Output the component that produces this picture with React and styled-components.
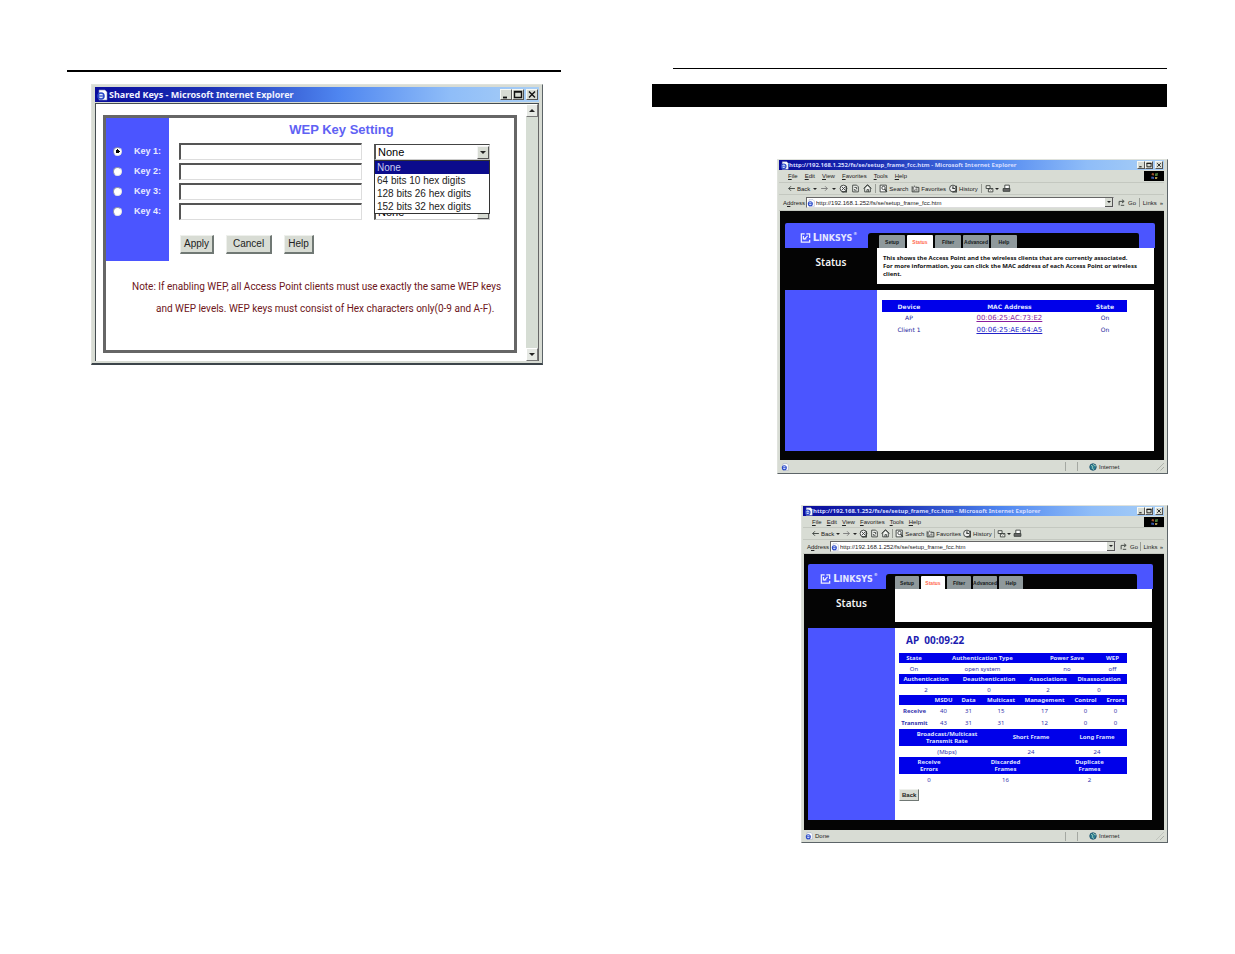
import React from "react";
import styled, { createGlobalStyle, css } from "styled-components";

const sans = `"Liberation Sans", Arial, sans-serif`;
const ui = `"Noto Sans", "Open Sans", sans-serif`;
const wide = `"DejaVu Sans", Verdana, sans-serif`;

const chrome = "#d8dcd4";
const indigo = "#4b55ff";
const royal = "#0000ea";

const GlobalStyle = createGlobalStyle`
  *, *::before, *::after { box-sizing: border-box; }
  body { margin: 0; background: #fff; color: #000; font-family: ${sans}; }
  button, input, select { font: inherit; color: inherit; margin: 0; }
  h1, h2, p, ul, fieldset { margin: 0; padding: 0; border: 0; }
`;

/* ---------- page ---------- */

const Spread = styled.main`
  display: grid;
  grid-template-columns: minmax(0, 494fr) minmax(0, 516fr);
  column-gap: 91px;
  align-items: start;
  padding: 68px 67px 112px;
`;

const Leaf = styled.section`
  display: flex;
  flex-direction: column;
  padding-top: ${(p) => p.$top || 0}px;
`;

const Rule = styled.hr`
  align-self: stretch;
  height: ${(p) => p.$weight}px;
  margin: 0 ${(p) => (p.$inset ? "1px 0 21px" : "0")};
  border: 0;
  background: #000;
`;

const ChapterBar = styled.div`
  height: 23px;
  margin: 15px 1px 0 0;
  background: #000;
`;

/* ---------- window frame ---------- */

const Frame = styled.article`
  display: flex;
  flex-direction: column;
  background: ${chrome};
  border: 1px solid #dfe2dc;
  border-right-color: #5c6468;
  border-bottom-color: #5c6468;
`;

const TitleBar = styled.header`
  display: flex;
  align-items: center;
  gap: ${(p) => (p.$large ? 1 : 0)}px;
  height: ${(p) => (p.$large ? 15 : 10)}px;
  padding-left: 1px;
  background: linear-gradient(90deg, #0a0c9c 0%, #1b2fb4 25%, #4f86f0 55%, #8fbdf8 80%, #a9cff6 100%);
  color: #fff;
  font: bold ${(p) => (p.$large ? 9 : 6)}px / 10px ${ui};
  white-space: nowrap;
  h2 { flex: 1; min-width: 0; overflow: hidden; font: inherit; line-height: 12px; color: ${(p) => (p.$large ? "#f0f2ff" : "#d5dcff")}; }
`;

const Controls = styled.div`
  display: flex;
  padding-right: 1px;
`;

const ControlButton = styled.button`
  display: grid;
  place-items: center;
  width: ${(p) => (p.$large ? 12 : 8)}px;
  height: ${(p) => (p.$large ? 11 : 8)}px;
  margin-left: ${(p) => (p.$apart ? 2 : 0)}px;
  padding: 0;
  background: ${chrome};
  border: 1px solid #f6f8f4;
  border-right-color: #555;
  border-bottom-color: #555;
  svg { width: 100%; height: 100%; }
`;

const Glyph = ({ kind }) => (
  <svg viewBox="0 0 10 9" fill="none" stroke="#111" strokeWidth="1.4" aria-hidden="true">
    {kind === "min" && <path d="M2 7.5h4" strokeWidth="1.8" />}
    {kind === "max" && <path d="M1.5 1.5h7v6h-7zM1 2h8" />}
    {kind === "close" && <path d="M2 1.5l6 6M8 1.5l-6 6" />}
  </svg>
);

const WindowControls = ({ large }) => (
  <Controls>
    <ControlButton $large={large} aria-label="Minimize"><Glyph kind="min" /></ControlButton>
    <ControlButton $large={large} aria-label="Maximize"><Glyph kind="max" /></ControlButton>
    <ControlButton $large={large} $apart aria-label="Close"><Glyph kind="close" /></ControlButton>
  </Controls>
);

const PageIconSvg = styled.svg`
  flex: none;
  width: ${(p) => p.$size}px;
  height: ${(p) => p.$size}px;
`;

const PageIcon = ({ size = 9 }) => (
  <PageIconSvg $size={size} viewBox="0 0 12 12" aria-hidden="true">
    <path d="M3 1h6l2 2v8H3z" fill="#fff" stroke="#8490b8" strokeWidth=".6" />
    <circle cx="5" cy="7" r="3" fill="#dfeaff" stroke="#2a49c8" strokeWidth="1.6" />
    <path d="M2.5 7h5" stroke="#2a49c8" strokeWidth="1.2" />
  </PageIconSvg>
);

/* ---------- shared keys window ---------- */

const KeysFrame = styled(Frame)`
  margin: 12px 18px 0 24px;
  padding: 2px 3px 2px 3px;
  border-bottom: 2px solid #3c444a;
`;

const KeysBody = styled.div`
  display: flex;
  margin-top: 1px;
  border-top: 1px solid #444c50;
  border-left: 1px solid #444c50;
  background: #fff;
`;

const KeysPanel = styled.form`
  flex: 1;
  min-width: 0;
  margin: 11px 9px 8px 7px;
  padding-bottom: 30px;
  border: 3px solid #666;
`;

const KeysGrid = styled.div`
  display: grid;
  grid-template-columns: 63px minmax(0, 1fr);
`;

const KeyList = styled.fieldset`
  min-width: 0;
  padding: 23px 0 40px;
  background: ${indigo};
`;

const KeyChoice = styled.label`
  display: flex;
  align-items: center;
  gap: 12px;
  height: 20px;
  padding-left: 7px;
  color: #e8eaff;
  font: bold 9px / 12px ${sans};
  white-space: nowrap;
`;

const Radio = styled.input`
  appearance: none;
  width: 9px;
  height: 9px;
  border: 1px solid #8a8fb0;
  border-right-color: #e6e6e6;
  border-bottom-color: #e6e6e6;
  border-radius: 50%;
  background: #fff;
  &:checked { background: radial-gradient(circle, #000 0 2px, #fff 2px); }
`;

const KeyFields = styled.div`
  padding: 0 24px 0 10px;
`;

const KeysHeading = styled.h1`
  height: 23px;
  padding-left: 14px;
  color: #5f62f4;
  font: bold 13px / 23px ${sans};
  text-align: center;
`;

const FieldRow = styled.div`
  display: grid;
  grid-template-columns: minmax(0, 183fr) minmax(0, 116fr);
  column-gap: 12px;
  align-items: center;
  height: 20px;
`;

const KeyInput = styled.input.attrs({ type: "text" })`
  width: 100%;
  height: 17px;
  border: 1px solid #ddd;
  border-top: 2px solid #555;
  border-left: 2px solid #555;
  background: #fff;
  font-size: 10px;
`;

const SelectWrap = styled.div`
  position: relative;
  padding-top: 2px;
`;

const LevelSelect = styled.select`
  appearance: none;
  display: block;
  width: 100%;
  height: 16px;
  padding: 0 14px 0 2px;
  border: 1px solid #ccc;
  border-top: 1px solid #444;
  border-left: 2px solid #555;
  border-radius: 0;
  background: #fff;
  font: 11px / 14px ${sans};
`;

const Arrow = styled.span`
  position: absolute;
  top: 4px;
  right: 1px;
  display: grid;
  place-items: center;
  width: 12px;
  height: 13px;
  background: ${chrome};
  border: 1px solid #f4f4f4;
  border-right-color: #555;
  border-bottom-color: #555;
  pointer-events: none;
`;

const Triangle = styled.span`
  border: ${(p) => p.$size || 3}px solid transparent;
  ${(p) => p.$up
    ? css`border-top: 0; border-bottom-color: #222;`
    : css`border-bottom: 0; border-top-color: #222;`}
`;

const Options = styled.ul`
  position: absolute;
  z-index: 2;
  top: 18px;
  left: 0;
  right: 0;
  border: 1px solid #333;
  background: #fff;
  list-style: none;
  font: 10px / 13px ${sans};
  white-space: nowrap;
`;

const Option = styled.li`
  height: 13px;
  padding-left: 2px;
  background: ${(p) => (p.$active ? "#0b0b8c" : "#fff")};
  color: ${(p) => (p.$active ? "#c9cbf0" : "#222")};
`;

const Actions = styled.div`
  display: flex;
  gap: 12px;
  padding: 14px 1px 0;
`;

const PushButton = styled.button`
  height: ${(p) => (p.$small ? 12 : 19)}px;
  padding: 0 ${(p) => (p.$small ? 2 : p.$roomy ? 6 : 3)}px;
  background: ${chrome};
  border: 1px solid #eef0ec;
  border-right: ${(p) => (p.$small ? 1 : 2)}px solid #707874;
  border-bottom: ${(p) => (p.$small ? 1 : 2)}px solid #707874;
  color: #222;
  font: ${(p) => (p.$small ? "bold 6px / 8px" : "10px / 14px")} ${sans};
`;

const Note = styled.p`
  padding: 15px 4px 0 50px;
  color: #6e1620;
  font: 10px / 22px Roboto, ${sans};
  text-indent: -24px;
  white-space: nowrap;
  span { display: block; }
  span + span { text-indent: 0; }
`;

const ScrollBar = styled.div`
  display: flex;
  flex-direction: column;
  justify-content: space-between;
  width: 13px;
  background: #d6ddd4;
  border-right: 1px solid #666;
`;

const ScrollButton = styled.button`
  display: grid;
  place-items: center;
  width: 12px;
  height: 13px;
  padding: 0;
  background: #e6e9e4;
  border: 1px solid #fff;
  border-right-color: #777;
  border-bottom-color: #777;
`;

const LEVELS = ["None", "64 bits 10 hex digits", "128 bits 26 hex digits", "152 bits 32 hex digits"];

function SharedKeysWindow() {
  return (
    <KeysFrame>
      <TitleBar $large>
        <PageIcon size={12} />
        <h2>Shared Keys - Microsoft Internet Explorer</h2>
        <WindowControls large />
      </TitleBar>
      <KeysBody>
        <KeysPanel onSubmit={(e) => e.preventDefault()}>
          <KeysGrid>
            <KeyList aria-label="Active key">
              {[1, 2, 3, 4].map((n) => (
                <KeyChoice key={n}>
                  <Radio type="radio" name="key" defaultChecked={n === 1} />
                  Key {n}:
                </KeyChoice>
              ))}
            </KeyList>
            <KeyFields>
              <KeysHeading>WEP Key Setting</KeysHeading>
              {[1, 2, 3, 4].map((n) => (
                <FieldRow key={n}>
                  <KeyInput aria-label={`Key ${n}`} />
                  <SelectWrap>
                    <LevelSelect aria-label={`Key ${n} level`}>
                      {LEVELS.map((l) => <option key={l}>{l}</option>)}
                    </LevelSelect>
                    <Arrow><Triangle /></Arrow>
                    {n === 1 && (
                      <Options role="listbox">
                        {LEVELS.map((l, i) => (
                          <Option key={l} role="option" aria-selected={i === 0} $active={i === 0}>{l}</Option>
                        ))}
                      </Options>
                    )}
                  </SelectWrap>
                </FieldRow>
              ))}
              <Actions>
                <PushButton type="button">Apply</PushButton>
                <PushButton type="button" $roomy>Cancel</PushButton>
                <PushButton type="button">Help</PushButton>
              </Actions>
            </KeyFields>
          </KeysGrid>
          <Note>
            <span>Note: If enabling WEP, all Access Point clients must use exactly the same WEP keys</span>
            <span>and WEP levels. WEP keys must consist of Hex characters only(0-9 and A-F).</span>
          </Note>
        </KeysPanel>
        <ScrollBar>
          <ScrollButton aria-label="Scroll up"><Triangle $up /></ScrollButton>
          <ScrollButton aria-label="Scroll down"><Triangle /></ScrollButton>
        </ScrollBar>
      </KeysBody>
    </KeysFrame>
  );
}

/* ---------- browser windows ---------- */

const BrowserFrame = styled(Frame)`
  margin: ${(p) => p.$top}px 0 0 ${(p) => p.$indent}px;
  padding: 0 3px 0 1px;
  color: #222;
  font: 6px / 8px ${sans};
`;

const Bar = styled.div`
  display: flex;
  align-items: center;
  height: ${(p) => p.$height}px;
  padding-left: ${(p) => p.$inset || 0}px;
  gap: ${(p) => p.$gap || 0}px;
  border-bottom: 1px solid #c4c8c0;
  white-space: nowrap;
`;

const MenuItem = styled.a`
  color: inherit;
  text-decoration: none;
`;

const Throbber = styled.div`
  display: grid;
  place-items: center;
  width: 20px;
  height: 10px;
  margin-left: auto;
  background: #000;
  svg { width: 9px; height: 8px; }
`;

const ToolButton = styled.button`
  display: flex;
  align-items: center;
  gap: 1px;
  padding: 0;
  border: 0;
  background: none;
  svg { width: 9px; height: 9px; }
`;

const Divider = styled.span`
  width: 1px;
  height: 9px;
  background: #999d96;
`;

const AddressField = styled.label`
  display: flex;
  flex: 1;
  align-items: center;
  min-width: 0;
  gap: 1px;
`;

const AddressBox = styled.span`
  display: flex;
  flex: 1;
  align-items: center;
  min-width: 0;
  height: 11px;
  background: #fff;
  border: 1px solid #666;
  border-right-color: #ddd;
  border-bottom-color: #ddd;
  input { flex: 1; min-width: 0; height: 9px; padding: 0 1px; border: 0; background: none; outline: 0; }
`;

const AddressArrow = styled.span`
  display: grid;
  place-items: center;
  width: 8px;
  height: 9px;
  background: ${chrome};
  border-right: 1px solid #555;
  border-bottom: 1px solid #555;
`;

const AddressTail = styled.div`
  display: flex;
  align-items: center;
  justify-content: space-between;
  width: ${(p) => p.$width}px;
  padding: 0 1px 0 4px;
`;

const Icon = ({ kind }) => (
  <svg viewBox="0 0 16 16" fill="none" stroke="#3a3f3c" strokeWidth="1.6" aria-hidden="true">
    {kind === "back" && <path d="M14 8H3M7 4L3 8l4 4" />}
    {kind === "forward" && <path d="M2 8h11M9 4l4 4-4 4" stroke="#777" />}
    {kind === "stop" && <><circle cx="8" cy="8" r="6" fill="#eee" /><path d="M5 5l6 6M11 5l-6 6" /><path d="M13 4v10H5" strokeWidth="2.4" /></>}
    {kind === "refresh" && <><path d="M3 2h7l3 3v9H3z" fill="#f2f4f0" /><path d="M6 6h4v3M10 11H6V9" /></>}
    {kind === "home" && <><path d="M3 7l5-5 5 5v7H3z" fill="#f2f4f0" /><path d="M7 14v-4h3v4M1 8l7-7 7 7" /></>}
    {kind === "search" && <><path d="M2 2h11v12H2z" fill="#fff" /><circle cx="8" cy="7" r="3" /><path d="M10 9l4 5" strokeWidth="2.4" /></>}
    {kind === "favorites" && <><path d="M2 4v10h12V6H9" fill="#d0d2cc" /><path d="M6 3l1 3 3-1-1 3 2 3-4-1-2 3V8L2 7l3-1z" fill="#fff" strokeWidth="1" /></>}
    {kind === "history" && <><circle cx="7" cy="8" r="6" fill="#eee" /><path d="M7 4v4h4M13 3v11H6" strokeWidth="2.2" /></>}
    {kind === "mail" && <><path d="M2 3h7v5H2zM6 8h8v6H6z" fill="#f4f4ee" /><path d="M6 8l4 3 4-3" strokeWidth="1" /></>}
    {kind === "print" && <><path d="M5 8V2h8v6" fill="#fff" /><path d="M2 8h12v5H2z" fill="#666" /></>}
    {kind === "go" && <path d="M2 13V6h8M7 3l4 3-4 3M5 13h6" />}
    {kind === "globe" && <><circle cx="8" cy="8" r="6.5" fill="#2c7f92" stroke="#184a66" /><path d="M4 5c3 0 4 2 3 4s1 3 3 4M9 2c0 3 3 3 5 4" stroke="#bfe0c8" /></>}
  </svg>
);

const Site = styled.div`
  display: flex;
  flex-direction: column;
  margin-left: 1px;
  padding: ${(p) => p.$pad};
  background: #040404;
`;

const SiteHeader = styled.div`
  display: flex;
  height: 25px;
  padding-right: 16px;
  background: ${indigo};
  border-radius: 2px 2px 0 0;
`;

const Brand = styled.div`
  display: flex;
  align-items: center;
  justify-content: center;
  gap: 2px;
  width: ${(p) => p.$width}px;
  padding: 5px 0 0 4px;
  color: #e4e6ff;
  font: bold 10px / 12px ${wide};
  small { font-size: 8px; }
  sup { align-self: flex-start; margin-left: -1px; font-size: 4px; line-height: 12px; }
  svg { flex: none; width: 11px; height: 10px; }
`;

const TabStrip = styled.nav`
  display: flex;
  flex: 1;
  align-items: flex-end;
  min-width: 0;
  gap: 2px;
  margin-top: 10px;
  padding-left: ${(p) => p.$inset}px;
  background: #040404;
  border-radius: 3px 2px 0 0;
`;

const Tab = styled.button`
  width: ${(p) => p.$width}px;
  height: 13px;
  padding: 0;
  overflow: hidden;
  border: 0;
  border-radius: 1px 1px 0 0;
  background: ${(p) => (p.$active ? "#fff" : "#8f999c")};
  color: ${(p) => (p.$active ? "#ff6a50" : "#15191b")};
  font: bold 5px / 12px ${sans};
`;

const Split = styled.div`
  display: grid;
  grid-template-columns: ${(p) => p.$side}px minmax(0, 1fr);
  min-height: ${(p) => p.$min}px;
  margin: ${(p) => p.$gap || 0}px 1px 0 0;
`;

const PageName = styled.h1`
  padding-top: 7px;
  color: #f4f4f4;
  font: 600 10px / 14px ${ui};
  text-align: center;
`;

const Intro = styled.p`
  padding: 6px 14px 0 6px;
  background: #fff;
  color: #111;
  font: bold 6px / 8px ${ui};
`;

const SidePanel = styled.aside`
  background: ${indigo};
`;

const Sheet = styled.section`
  padding: ${(p) => p.$pad};
  background: #fff;
`;

const StatusBar = styled.footer`
  display: flex;
  align-items: center;
  gap: 2px;
  height: ${(p) => p.$height}px;
  padding-left: 2px;
  svg { width: 8px; height: 8px; }
`;

const Zone = styled.span`
  display: flex;
  align-items: center;
  gap: 2px;
  width: ${(p) => p.$width}px;
  height: 9px;
  margin-left: ${(p) => (p.$first ? "auto" : 0)};
  border-left: 1px solid ${(p) => (p.$plain ? "transparent" : "#a4a8a2")};
`;

const Grip = styled.span`
  width: 8px;
  height: 8px;
  background: repeating-linear-gradient(135deg, #d8dcd4 0 2px, #a9ada6 2px 3px);
  clip-path: polygon(100% 0, 100% 100%, 0 100%);
`;

const MENUS = ["File", "Edit", "View", "Favorites", "Tools", "Help"];
const TABS = ["Setup", "Status", "Filter", "Advanced", "Help"];
const URL = "http://192.168.1.252/fs/se/setup_frame_fcc.htm";

function BrowserWindow({ geo, intro, status, children }) {
  return (
    <BrowserFrame $top={geo.top} $indent={geo.indent}>
      <TitleBar>
        <PageIcon size={9} />
        <h2>{URL} - Microsoft Internet Explorer</h2>
        <WindowControls />
      </TitleBar>
      <Bar $height={geo.bars[0]} $inset={9} $gap={geo.menuGap}>
        {MENUS.map((m) => <MenuItem key={m} href="#"><u>{m[0]}</u>{m.slice(1)}</MenuItem>)}
        <Throbber>
          <svg viewBox="0 0 9 8" aria-hidden="true">
            <path d="M2 1l2 .5v2L1.5 3z" fill="#a0502c" /><path d="M5 1.5L8 1 7.5 4H5z" fill="#4c7a3c" />
            <path d="M1.5 4.5L4 5v2L1 6.5z" fill="#3a58a8" /><path d="M5 5h2.5L7 7H5z" fill="#a8904a" />
          </svg>
        </Throbber>
      </Bar>
      <Bar $height={12} $inset={8} $gap={geo.toolGap}>
        <ToolButton><Icon kind="back" />Back</ToolButton>
        <Triangle $size={2} />
        <ToolButton aria-label="Forward"><Icon kind="forward" /></ToolButton>
        <Triangle $size={2} />
        <ToolButton aria-label="Stop"><Icon kind="stop" /></ToolButton>
        <ToolButton aria-label="Refresh"><Icon kind="refresh" /></ToolButton>
        <ToolButton aria-label="Home"><Icon kind="home" /></ToolButton>
        <Divider />
        <ToolButton><Icon kind="search" />Search</ToolButton>
        <ToolButton><Icon kind="favorites" />Favorites</ToolButton>
        <ToolButton><Icon kind="history" />History</ToolButton>
        <Divider />
        <ToolButton aria-label="Mail"><Icon kind="mail" /><Triangle $size={2} /></ToolButton>
        <ToolButton aria-label="Print"><Icon kind="print" /></ToolButton>
      </Bar>
      <Bar $height={geo.bars[1]} $inset={4}>
        <AddressField>
          <span>A<u>d</u>dress</span>
          <AddressBox>
            <PageIcon size={8} />
            <input type="text" defaultValue={URL} />
            <AddressArrow><Triangle $size={2} /></AddressArrow>
          </AddressBox>
        </AddressField>
        <AddressTail $width={geo.tail}>
          <ToolButton><Icon kind="go" />Go</ToolButton>
          <Divider />
          <span>Links</span>
          <span>»</span>
        </AddressTail>
      </Bar>
      <Site $pad={geo.sitePad}>
        <SiteHeader>
          <Brand $width={geo.brand}>
            <svg viewBox="0 0 12 12" fill="none" stroke="#eef" strokeWidth="1.5" aria-hidden="true">
              <path d="M5 1H1v10h10V8" /><path d="M7 1h4v5" /><path d="M3.5 3.5v3.5H7M8.5 3.5L4 8" />
            </svg>
            <span>L<small>INKSYS</small></span>
            <sup>®</sup>
          </Brand>
          <TabStrip $inset={geo.tabInset}>
            {TABS.map((t) => <Tab key={t} $width={geo.tab} $active={t === "Status"}>{t}</Tab>)}
          </TabStrip>
        </SiteHeader>
        <Split $side={geo.side} $min={geo.introHeight}>
          <PageName>Status</PageName>
          <Intro>{intro}</Intro>
        </Split>
        <Split $side={geo.side} $min={geo.sheetHeight} $gap={6}>
          <SidePanel />
          <Sheet $pad={geo.sheetPad}>{children}</Sheet>
        </Split>
      </Site>
      <StatusBar $height={geo.statusHeight}>
        <PageIcon size={8} />
        <span>{status}</span>
        <Zone $first $width={10} />
        <Zone $width={9} />
        <Zone $plain $width={66}><Icon kind="globe" />Internet</Zone>
        <Grip />
      </StatusBar>
    </BrowserFrame>
  );
}

/* ---------- data tables ---------- */

const DataTable = styled.table`
  width: 100%;
  table-layout: fixed;
  border-collapse: collapse;
  color: ${(p) => (p.$wide ? "#22229a" : "#3434ae")};
  font: 6px / 8px ${(p) => (p.$wide ? wide : ui)};
  text-align: center;
  th, td { height: ${(p) => p.$row}px; padding: 0; white-space: nowrap; }
  thead th { height: ${(p) => p.$head}px; background: ${royal}; color: #dfe2ff; font-weight: bold; line-height: 7px; white-space: pre-line; }
`;

const MacLink = styled.a`
  color: ${(p) => (p.$visited ? "#8a1c9c" : "#2222c8")};
  font-size: 7px;
`;

const ApHeading = styled.h2`
  height: 25px;
  padding: 5px 0 0 7px;
  color: #1c1cb0;
  font: bold 10px / 14px ${ui};
  white-space: pre;
`;

const SheetFooter = styled.div`
  padding-top: 4px;
`;

function Stats({ cols, heads, rows, head = 10, row = 11 }) {
  const total = cols.reduce((a, b) => a + b, 0);
  return (
    <DataTable $head={head} $row={row}>
      <colgroup>{cols.map((c, i) => <col key={i} style={{ width: `${(c / total) * 100}%` }} />)}</colgroup>
      <thead><tr>{heads.map((h, i) => <th key={i} scope="col">{h}</th>)}</tr></thead>
      <tbody>
        {rows.map((r, i) => (
          <tr key={i}>
            {r.map((v, j) => (/^[RT]/.test(v) ? <th key={j} scope="row">{v}</th> : <td key={j}>{v}</td>))}
          </tr>
        ))}
      </tbody>
    </DataTable>
  );
}

const CLIENTS_GEO = {
  top: 52, indent: 125, bars: [13, 16], menuGap: 7, toolGap: 3, tail: 50,
  sitePad: "12px 9px 9px 5px", brand: 83, tabInset: 11, tab: 26, side: 92,
  introHeight: 36, sheetHeight: 161, sheetPad: "10px 27px 0 5px", statusHeight: 13,
};

const AP_GEO = {
  top: 31, indent: 149, bars: [12, 14], menuGap: 5, toolGap: 2, tail: 48,
  sitePad: "10px 11px 10px 4px", brand: 78, tabInset: 9, tab: 24, side: 87,
  introHeight: 33, sheetHeight: 192, sheetPad: "0 25px 0 4px", statusHeight: 12,
};

export default function App() {
  return (
    <>
      <GlobalStyle />
      <Spread>
        <Leaf $top={2}>
          <Rule $weight={2} />
          <SharedKeysWindow />
        </Leaf>
        <Leaf>
          <Rule $weight={1} $inset />
          <ChapterBar />
          <BrowserWindow
            geo={CLIENTS_GEO}
            intro={
              <>
                This shows the Access Point and the wireless clients that are currently associated.
                <br />
                For more information, you can click the MAC address of each Access Point or wireless client.
              </>
            }
          >
            <DataTable $wide $head={12} $row={12}>
              <colgroup><col style={{ width: "22%" }} /><col style={{ width: "60%" }} /><col style={{ width: "18%" }} /></colgroup>
              <thead><tr><th scope="col">Device</th><th scope="col">MAC Address</th><th scope="col">State</th></tr></thead>
              <tbody>
                <tr><td>AP</td><td><MacLink href="#" $visited>00:06:25:AC:73:E2</MacLink></td><td>On</td></tr>
                <tr><td>Client 1</td><td><MacLink href="#">00:06:25:AE:64:A5</MacLink></td><td>On</td></tr>
              </tbody>
            </DataTable>
          </BrowserWindow>
          <BrowserWindow geo={AP_GEO} status="Done">
            <ApHeading>AP  00:09:22</ApHeading>
            <Stats cols={[30, 107, 62, 29]} heads={["State", "Authentication Type", "Power Save", "WEP"]} rows={[["On", "open system", "no", "off"]]} />
            <Stats cols={[54, 72, 46, 56]} heads={["Authentication", "Deauthentication", "Associations", "Disassociation"]} rows={[["2", "0", "2", "0"]]} />
            <Stats
              row={12}
              cols={[31, 27, 23, 42, 45, 37, 23]}
              heads={["", "MSDU", "Data", "Multicast", "Management", "Control", "Errors"]}
              rows={[["Receive", "40", "31", "15", "17", "0", "0"], ["Transmit", "43", "31", "31", "12", "0", "0"]]}
            />
            <Stats head={17} cols={[96, 72, 60]} heads={["Broadcast/Multicast\nTransmit Rate", "Short Frame", "Long Frame"]} rows={[["(Mbps)", "24", "24"]]} />
            <Stats head={17} cols={[60, 93, 75]} heads={["Receive\nErrors", "Discarded\nFrames", "Duplicate\nFrames"]} rows={[["0", "16", "2"]]} />
            <SheetFooter><PushButton $small>Back</PushButton></SheetFooter>
          </BrowserWindow>
        </Leaf>
      </Spread>
    </>
  );
}
